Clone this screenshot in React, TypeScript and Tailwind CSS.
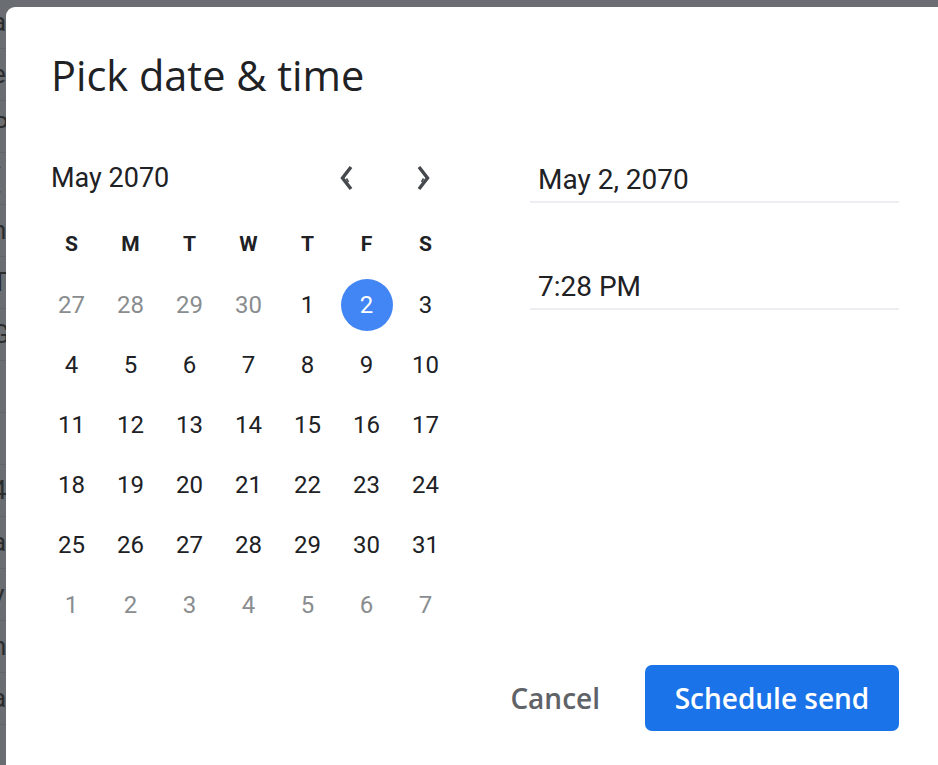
type Day = { n: number; muted?: boolean; selected?: boolean };

const weekDays = ["S", "M", "T", "W", "T", "F", "S"];

// page text peeking out behind the dialog
const pageRows = ["a", "e", "P", "(", "n", "T", "G", "", "", "4", "a", "v", "h", "a", ""];

const buildWeeks = (): Day[][] => {
  const days: Day[] = [];
  [27, 28, 29, 30].forEach((n) => days.push({ n, muted: true }));
  for (let n = 1; n <= 31; n++) days.push({ n, selected: n === 2 });
  for (let n = 1; n <= 7; n++) days.push({ n, muted: true });
  const weeks: Day[][] = [];
  for (let i = 0; i < days.length; i += 7) weeks.push(days.slice(i, i + 7));
  return weeks;
};

const Chevron = ({ dir }: { dir: "left" | "right" }) => (
  <svg width="16" height="26" viewBox="0 0 16 26" className="text-[#45484c]">
    {dir === "left" ? (
      <>
        <polyline points="12,2 3.5,13 12,24" fill="none" stroke="currentColor" strokeWidth="3.4" />
        <polyline points="9.5,17 7.5,13.5" fill="none" stroke="currentColor" strokeWidth="1.6" />
      </>
    ) : (
      <>
        <polyline points="4,2 12.5,13 4,24" fill="none" stroke="currentColor" strokeWidth="3.4" />
        <polyline points="6.5,17 8.5,13.5" fill="none" stroke="currentColor" strokeWidth="1.6" />
      </>
    )}
  </svg>
);

const Field = ({ value, className = "" }: { value: string; className?: string }) => (
  <div className={`border-b-2 border-[#eceef1] pt-[12px] pb-[6px] pl-[8px] ${className}`}>
    <span className="block text-[28px] leading-[30px] text-[#202124] font-['Roboto',sans-serif]">
      {value}
    </span>
  </div>
);

export default function App() {
  const weeks = buildWeeks();

  return (
    <div className="relative w-[938px] h-[765px] overflow-hidden bg-[#6a6d71] font-['Roboto',sans-serif]">
      {/* Background page (dimmed) */}
      <div className="flex flex-col mt-[-3px]">
        {pageRows.map((ch, i) => (
          <div
            key={i}
            className="h-[52px] flex items-center border-b border-[#626569] text-[26px] text-[#2a2c2e]"
          >
            <span className="ml-[-8px]">{ch || "\u00a0"}</span>
          </div>
        ))}
      </div>

      {/* Dialog */}
      <div className="absolute left-[6px] top-[7px] w-[960px] h-[790px] bg-white rounded-tl-[9px] pl-[36px] pt-[43px]">
        <h1 className="pl-[9px] text-[41.5px] leading-[50px] text-[#202124] font-['Open_Sans',sans-serif]">
          Pick date &amp; time
        </h1>

        <div className="flex mt-[53px]">
          {/* Calendar */}
          <div className="w-[413px]">
            <div className="h-[50px] flex items-center justify-between">
              <span className="pl-[9px] text-[27px] text-[#202124]">May 2070</span>
              <div className="flex items-center gap-[60px] mr-[24px]">
                <button className="flex items-center">
                  <Chevron dir="left" />
                </button>
                <button className="flex items-center">
                  <Chevron dir="right" />
                </button>
              </div>
            </div>

            <div className="mt-[12px] grid grid-cols-7">
              {weekDays.map((d, i) => (
                <div
                  key={i}
                  className="h-[60px] flex items-center justify-center text-[21px] font-bold text-[#202124]"
                >
                  {d}
                </div>
              ))}
              {weeks.map((week) =>
                week.map((day, j) => (
                  <div key={`${day.n}-${day.muted}-${j}`} className="h-[60px] flex items-center justify-center">
                    <span
                      className={`w-[52px] h-[52px] rounded-full flex items-center justify-center text-[24px] ${
                        day.selected
                          ? "bg-[#4285f4] text-white"
                          : day.muted
                          ? "text-[#8a8d90]"
                          : "text-[#202124]"
                      }`}
                    >
                      {day.n}
                    </span>
                  </div>
                ))
              )}
            </div>
          </div>

          {/* Date/time fields */}
          <div className="ml-[75px] w-[369px] flex flex-col">
            <Field value="May 2, 2070" />
            <Field value="7:28 PM" className="mt-[57px]" />
          </div>
        </div>

        {/* Actions */}
        <div className="w-[857px] mt-[30px] flex items-center justify-end">
          <button className="px-[10px] text-[28px] font-semibold text-[#5f6368] font-['Open_Sans',sans-serif]">
            Cancel
          </button>
          <button className="ml-[35px] w-[254px] h-[66px] rounded-[7px] bg-[#1a73e8] text-white text-[28px] font-semibold font-['Open_Sans',sans-serif]">
            Schedule send
          </button>
        </div>
      </div>
    </div>
  );
}
